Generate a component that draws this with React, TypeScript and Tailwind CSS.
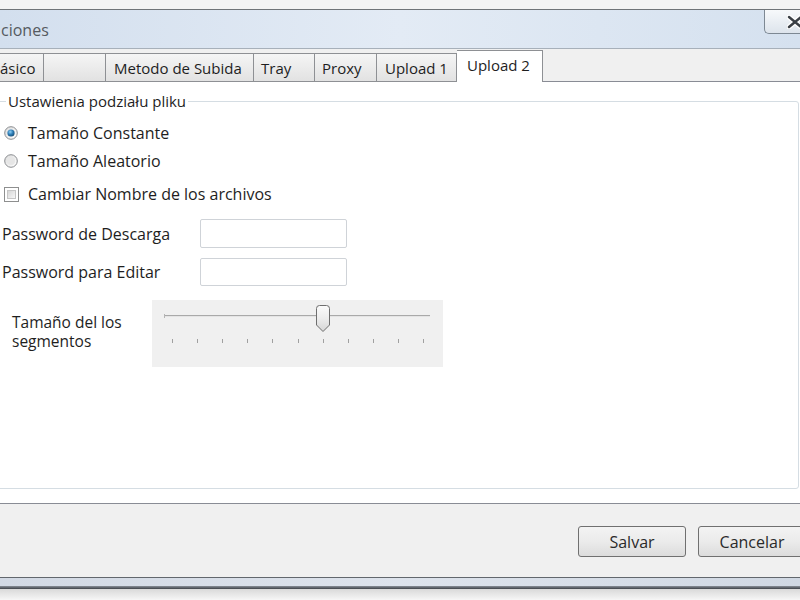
import React from "react";

function Radio({ checked }: { checked: boolean }) {
  return (
    <svg width="14" height="14" viewBox="0 0 14 14" className="shrink-0">
      <defs>
        <linearGradient id={checked ? "rgA" : "rgB"} x1="0" y1="0" x2="1" y2="1">
          <stop offset="0" stopColor="#dcdcdc" />
          <stop offset="1" stopColor="#ffffff" />
        </linearGradient>
        <radialGradient id="dot" cx="0.4" cy="0.35" r="0.7">
          <stop offset="0" stopColor="#8fd0f5" />
          <stop offset="0.5" stopColor="#2f7fb8" />
          <stop offset="1" stopColor="#154a72" />
        </radialGradient>
      </defs>
      <circle cx="7" cy="7" r="6.3" fill={`url(#${checked ? "rgA" : "rgB"})`} stroke="#8b8d90" strokeWidth="1" />
      {checked ? (
        <circle cx="7" cy="7" r="3.6" fill="url(#dot)" />
      ) : (
        <circle cx="7" cy="7" r="4" fill="#e6e6e6" />
      )}
    </svg>
  );
}

export default function App() {
  const ticks = Array.from({ length: 11 }, (_, i) => i);
  return (
    <div className="w-[800px] h-[600px] overflow-hidden bg-[#f0f0f0] flex flex-col text-[#1e1e1e] font-['Open_Sans','Liberation_Sans',sans-serif]">
      {/* top outer frame */}
      <div className="h-[9px] shrink-0 bg-[#f4f4f4]" />
      <div className="h-px shrink-0 bg-[#707478]" />
      {/* title bar */}
      <div className="h-[38px] shrink-0 flex justify-between items-start bg-gradient-to-r from-[#d3dfee] via-[#e3ebf5] to-[#d5e1ef]">
        <div className="pt-[9px] pl-px text-[16px] leading-[22px] text-[#555a60]">ciones</div>
        <div className="w-[36px] h-[24px] border-l border-b border-[#7d8893] rounded-bl-[5px] bg-gradient-to-b from-[#f7f9fb] to-[#dde4ec] flex items-center">
          <svg width="16" height="14" viewBox="0 0 16 14" className="ml-[22px] shrink-0">
            <path d="M2 2 L14 12 M14 2 L2 12" stroke="#ffffff" strokeWidth="5" strokeLinecap="round" />
            <path d="M2 2 L14 12 M14 2 L2 12" stroke="#3a3f45" strokeWidth="2.4" strokeLinecap="round" />
          </svg>
        </div>
      </div>
      <div className="h-px shrink-0 bg-[#a7b0ba]" />

      {/* tabs row */}
      <div className="h-[33px] shrink-0 -mb-px relative z-10 flex items-end text-[15px] leading-[20px]">
        <div className="w-[44px] h-[29px] shrink-0 border-t border-r border-b border-[#8e9094] bg-gradient-to-b from-[#f5f5f5] to-[#e2e2e2] flex items-center">
          ásico
        </div>
        <div className="w-[62px] h-[29px] shrink-0 border-t border-r border-b border-[#8e9094] bg-gradient-to-b from-[#f5f5f5] to-[#e2e2e2]" />
        <div className="w-[148px] h-[29px] shrink-0 border-t border-r border-b border-[#8e9094] bg-gradient-to-b from-[#f5f5f5] to-[#e2e2e2] flex items-center pl-[8px]">
          Metodo de Subida
        </div>
        <div className="w-[61px] h-[29px] shrink-0 border-t border-r border-b border-[#8e9094] bg-gradient-to-b from-[#f5f5f5] to-[#e2e2e2] flex items-center pl-[7px]">
          Tray
        </div>
        <div className="w-[62px] h-[29px] shrink-0 border-t border-r border-b border-[#8e9094] bg-gradient-to-b from-[#f5f5f5] to-[#e2e2e2] flex items-center pl-[7px]">
          Proxy
        </div>
        <div className="w-[80px] h-[29px] shrink-0 border-t border-r border-b border-[#8e9094] bg-gradient-to-b from-[#f5f5f5] to-[#e2e2e2] flex items-center pl-[8px]">
          Upload 1
        </div>
        <div className="w-[86px] h-[32px] shrink-0 border-t border-r border-[#8e9094] bg-white flex items-start pt-[4px] pl-[10px]">
          Upload 2
        </div>
      </div>

      {/* tab panel */}
      <div className="h-[423px] shrink-0 bg-white border-t border-b border-[#898c95] text-[16px] leading-[20px]">
        <fieldset className="mt-[10px] ml-[-6px] w-[805px] h-[397px] border border-[#d5dde3] rounded-[3px]">
          <legend className="ml-[11px] px-[2px] text-[15px] leading-[18px]">Ustawienia podziału pliku</legend>
          <div className="pl-[9px] flex flex-col">
            <div className="mt-[9px] h-[28px] flex items-center gap-[10px]">
              <Radio checked={true} />
              <span>Tamaño Constante</span>
            </div>
            <div className="h-[28px] flex items-center gap-[10px]">
              <Radio checked={false} />
              <span>Tamaño Aleatorio</span>
            </div>
            <div className="h-[38px] flex items-center gap-[9px]">
              <div className="w-[15px] h-[15px] shrink-0 border border-[#8e8f8f] bg-white p-[2px]">
                <div className="w-full h-full bg-gradient-to-br from-[#d6d6d6] to-[#f7f7f7] border border-[#c6c6c6]" />
              </div>
              <span>Cambiar Nombre de los archivos</span>
            </div>
            <div className="mt-[6px] h-[29px] flex items-center ml-[-2px]">
              <span className="w-[198px] shrink-0">Password de Descarga</span>
              <div className="w-[147px] h-[29px] border border-[#cfd3d8] rounded-[2px] bg-white" />
            </div>
            <div className="mt-[10px] h-[28px] flex items-center ml-[-2px]">
              <span className="w-[198px] shrink-0">Password para Editar</span>
              <div className="w-[147px] h-[28px] border border-[#cfd3d8] rounded-[2px] bg-white" />
            </div>
            <div className="mt-[14px] h-[67px] flex ml-[8px]">
              <div className="w-[140px] shrink-0 pt-[13px] text-[15.5px] leading-[19px]">
                Tamaño del los
                <br />
                segmentos
              </div>
              <div className="w-[291px] h-[67px] bg-[#f0f0f0]">
                <svg width="291" height="67" viewBox="0 0 291 67">
                  <defs>
                    <linearGradient id="thumb" x1="0" y1="0" x2="0" y2="1">
                      <stop offset="0" stopColor="#fbfbfb" />
                      <stop offset="0.5" stopColor="#ececec" />
                      <stop offset="1" stopColor="#d6d6d6" />
                    </linearGradient>
                  </defs>
                  <line x1="12" y1="15.5" x2="278" y2="15.5" stroke="#a9a9a9" strokeWidth="1" />
                  <line x1="12" y1="16.5" x2="278" y2="16.5" stroke="#e4e4e4" strokeWidth="1" />
                  <line x1="12.5" y1="14" x2="12.5" y2="18" stroke="#b5b5b5" strokeWidth="1" />
                  {ticks.map((i) => (
                    <line
                      key={i}
                      x1={20.5 + Math.round(i * 25.1)}
                      y1="39"
                      x2={20.5 + Math.round(i * 25.1)}
                      y2="43"
                      stroke="#a0a0a0"
                      strokeWidth="1"
                    />
                  ))}
                  <path
                    d="M164.5 8.5 Q164.5 5.5 167.5 5.5 L174.5 5.5 Q177.5 5.5 177.5 8.5 L177.5 25 L171 31.5 L164.5 25 Z"
                    fill="url(#thumb)"
                    stroke="#6e6e6e"
                    strokeWidth="1"
                  />
                </svg>
              </div>
            </div>
          </div>
        </fieldset>
      </div>

      {/* button bar */}
      <div className="h-[73px] shrink-0 flex items-start pt-[22px] pl-[578px] gap-[12px] text-[16px]">
        <button className="w-[108px] h-[31px] shrink-0 border border-[#707070] rounded-[3px] bg-gradient-to-b from-[#f3f3f3] via-[#ebebeb] to-[#dcdcdc] text-[#2a2a2a]">
          Salvar
        </button>
        <button className="w-[108px] h-[31px] shrink-0 border border-[#707070] rounded-[3px] bg-gradient-to-b from-[#f3f3f3] via-[#ebebeb] to-[#dcdcdc] text-[#2a2a2a]">
          Cancelar
        </button>
      </div>

      {/* bottom frame */}
      <div className="h-px shrink-0 bg-[#62676d]" />
      <div className="h-[8px] shrink-0 bg-gradient-to-r from-[#d2d9e4] via-[#dde3ec] to-[#d0d8e3]" />
      <div className="h-[3px] shrink-0 bg-gradient-to-b from-[#8a9099] to-[#3f4349]" />
      <div className="flex-1 bg-gradient-to-b from-[#d9d9d9] to-[#f6f6f6]" />
    </div>
  );
}
